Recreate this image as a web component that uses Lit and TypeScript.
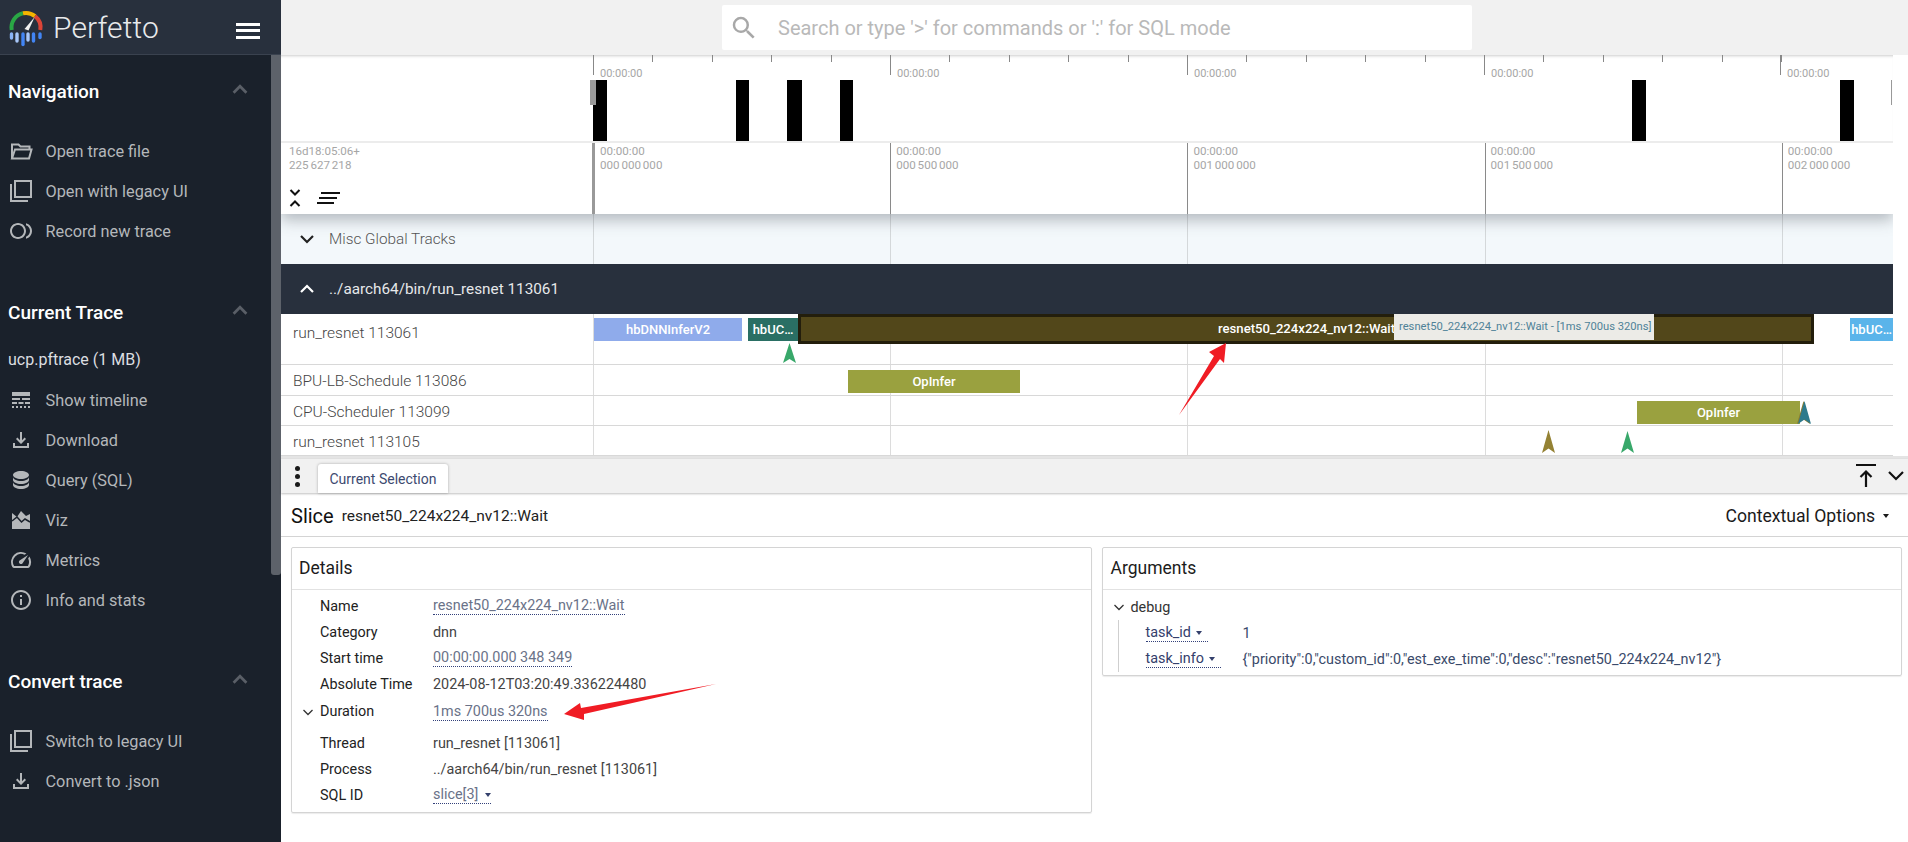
import { LitElement, html, css, svg } from "lit";
import { customElement } from "lit/decorators.js";

const P: Record<string, string> = {
  legacy: "M3 5H1v18h18v-2H3V5zm20-4H5v18h18V1zm-2 16H7V3h14v14z",
  record: "M9 4c-4.42 0-8 3.58-8 8s3.58 8 8 8 8-3.58 8-8-3.58-8-8-8zm0 14c-3.31 0-6-2.69-6-6s2.69-6 6-6 6 2.69 6 6-2.69 6-6 6zm8-13.74v2.09c2.33.82 4 3.04 4 5.65s-1.67 4.83-4 5.65v2.09c3.45-.89 6-4.01 6-7.74s-2.55-6.85-6-7.74z",
  timeline: "M3 16h5v-2H3v2zm6.5 0h5v-2h-5v2zm6.5 0h5v-2h-5v2zM3 20h2v-2H3v2zm4 0h2v-2H7v2zm4 0h2v-2h-2v2zm4 0h2v-2h-2v2zm4 0h2v-2h-2v2zM3 12h8v-2H3v2zm10 0h8v-2h-8v2zM3 4v4h18V4H3z",
  download: "M18 15v3H6v-3H4v5h16v-5h-2zm-1-4l-1.41-1.41L13 12.17V4h-2v8.17L8.41 9.59 7 11l5 5 5-5z",
  query: "M12 3C7.58 3 4 4.79 4 7s3.58 4 8 4 8-1.79 8-4-3.58-4-8-4zM4 9v3c0 2.21 3.58 4 8 4s8-1.79 8-4V9c0 2.21-3.58 4-8 4s-8-1.79-8-4zm0 5v3c0 2.21 3.58 4 8 4s8-1.79 8-4v-3c0 2.21-3.58 4-8 4s-8-1.79-8-4z",
  viz: "M3 5l5 4 4-6 5 5 4-2v15H3z",
  metrics: "M20.38 8.57l-1.23 1.85a8 8 0 0 1-.22 7.58H5.07A8 8 0 0 1 15.58 6.85l1.85-1.23A10 10 0 0 0 3.35 19a2 2 0 0 0 1.72 1h13.85a2 2 0 0 0 1.74-1 10 10 0 0 0-.27-10.44zm-9.79 6.84a2 2 0 0 0 2.83 0l5.66-8.49-8.49 5.66a2 2 0 0 0 0 2.83z",
  info: "M11 7h2v2h-2zm0 4h2v6h-2zm1-9C6.48 2 2 6.48 2 12s4.48 10 10 10 10-4.48 10-10S17.52 2 12 2zm0 18c-4.41 0-8-3.59-8-8s3.59-8 8-8 8 3.59 8 8-3.59 8-8 8z",
};

function icon(name: string) {
  if (name === "folder") {
    return html`<svg class="nav-icon" viewBox="0 0 24 24" fill="none" stroke="currentColor" stroke-width="2"><path d="M3 19.5V5.5h6.5l2 2h9v3"/><path d="M3 19.5l3-9h16.5l-2.5 9z"/></svg>`;
  }
  return html`<svg class="nav-icon" viewBox="0 0 24 24" fill="currentColor"><path d=${P[name]}/>${name === "viz"
    ? svg`<path d="M3 13l5-4 4.5 5 3.5-3 5 3" fill="none" stroke="#1a212b" stroke-width="1.6"/>`
    : ""}</svg>`;
}

const chevUp = html`<svg class="sec-chev" viewBox="0 0 24 24" fill="none" stroke="currentColor" stroke-width="3"><path d="M5 16l7-7 7 7"/></svg>`;

const sections = [
  { title: "Navigation", sub: "", items: [["folder", "Open trace file"], ["legacy", "Open with legacy UI"], ["record", "Record new trace"]] },
  { title: "Current Trace", sub: "ucp.pftrace (1 MB)", items: [["timeline", "Show timeline"], ["download", "Download"], ["query", "Query (SQL)"], ["viz", "Viz"], ["metrics", "Metrics"], ["info", "Info and stats"]] },
  { title: "Convert trace", sub: "", items: [["legacy", "Switch to legacy UI"], ["download", "Convert to .json"]] },
];

const OV_MAJORS = [0, 297, 594, 891, 1187];
const OV_MINORS = Array.from({ length: 21 }, (_, i) => i * 59.4);
const AX_MAJORS = [0, 297.2, 594.4, 891.6, 1188.8];
const AXIS = ["000 000 000", "000 500 000", "001 000 000", "001 500 000", "002 000 000"];
const BARS: [number, number][] = [[0, 14], [143, 13], [194, 15], [247, 13], [1039, 14], [1247, 14]];

@customElement("app-root")
export class AppRoot extends LitElement {
  static styles = css`
    :host { display: block; width: 1908px; height: 842px; position: relative; overflow: hidden; background: #fff; font-family: Roboto, "Liberation Sans", sans-serif; }
    .app { display: flex; width: 100%; height: 100%; }

    .sidebar { width: 281px; flex: none; background: #1a212b; color: #b4b7ba; position: relative; }
    .brand { height: 54px; background: #28303d; border-bottom: 1px solid #3a424f; display: flex; align-items: center; padding-left: 8px; box-sizing: content-box; }
    .logo { width: 38px; height: 40px; flex: none; }
    .brand-name { font-size: 30px; font-weight: 300; color: #e8eaec; margin-left: 7px; letter-spacing: 0.1px; }
    .burger { margin-left: auto; margin-right: 21px; width: 24px; height: 16px; display: flex; flex-direction: column; justify-content: space-between; margin-top: 7px; }
    .burger i { display: block; height: 3px; background: #fff; }
    .scroll { position: absolute; left: 271px; top: 55px; width: 10px; height: 520px; background: #5d626a; border-radius: 0 0 3px 3px; }
    .section { padding-top: 41px; }
    .section:first-of-type { padding-top: 16px; }
    .sec-head { height: 40px; display: flex; align-items: center; justify-content: space-between; padding: 0 30px 0 8px; color: #fff; font-size: 19px; font-weight: 500; }
    .sec-chev { width: 22px; height: 22px; color: #5a5f67; margin-top: -4px; }
    .sub { height: 40px; line-height: 40px; padding-left: 8px; margin-top: 8px; font-size: 16px; color: #dcdee0; }
    .nosub { height: 20px; }
    .item { height: 40px; display: flex; align-items: center; font-size: 16.3px; }
    .nav-icon { width: 24px; height: 24px; margin-left: 8.5px; margin-right: 13px; flex: none; }

    .main { flex: 1; min-width: 0; display: flex; flex-direction: column; position: relative; }
    .topbar { height: 55px; flex: none; background: #f1f1f1; padding: 5px 0 0 441px; box-sizing: border-box; }
    .search { width: 750px; height: 45px; background: #fff; border-radius: 2px; display: flex; align-items: center; color: #b9b9b9; font-size: 20px; }
    .search svg { width: 30px; height: 30px; margin-left: 7px; margin-right: 19px; color: #a8a8a8; flex: none; }

    .timeline { width: 1612px; flex: none; }
    .ov { height: 88px; display: flex; border-bottom: 2px solid #ececec; box-sizing: border-box; background: #fff; box-shadow: inset 0 3px 3px -2px #ccc; }
    .left { width: 312px; flex: none; box-sizing: border-box; }
    .canvas { flex: 1; position: relative; }
    .tick { position: absolute; top: 0; width: 1px; background: #888; }
    .tick.major { height: 20px; }
    .tick.minor { height: 7px; }
    .ov-label { position: absolute; top: 12px; font-size: 11px; line-height: 14px; color: #a6a6a6; }
    .bar { position: absolute; top: 25px; bottom: 0; background: #000; }
    .handle { position: absolute; top: 25px; left: -3px; width: 6px; height: 25px; background: #999; }
    .end-mark { position: absolute; left: 1298px; top: 25px; width: 1px; height: 25px; background: #999; }

    .axis { height: 71px; display: flex; background: #fff; position: relative; z-index: 2; box-shadow: 0 6px 14px rgba(60, 70, 80, 0.35); clip-path: inset(0 0 -30px 0); flex: none; }
    .axis .left { padding: 1px 0 0 8px; position: relative; font-size: 11.6px; line-height: 14px; color: #a6a6a6; word-spacing: -1px; display: flex; flex-direction: column; }
    .axis-icons { margin-top: auto; margin-bottom: 6px; display: flex; align-items: center; gap: 16px; }
    .axis-icons svg { display: block; }
    .ax-tick { position: absolute; top: 0; bottom: 0; width: 1px; background: #8a8a8a; }
    .ax-tick.first { width: 3px; left: -1px; background: #999; }
    .ax-label { position: absolute; top: 1px; font-size: 11.6px; line-height: 14px; color: #a6a6a6; white-space: pre; word-spacing: -1px; }

    .row { display: flex; border-bottom: 1px solid #d8d8d8; box-sizing: border-box; }
    .row .left { font-size: 15.5px; font-weight: 300; color: #444; padding-left: 12px; line-height: 32px; }
    .row .canvas { background-image: repeating-linear-gradient(to right, #dcdcdc 0 1px, transparent 1px 297.2px); }
    .row.first .left { line-height: 38px; }
    .misc { height: 50px; background: #f3f8fb; display: flex; }
    .misc .canvas { background-image: repeating-linear-gradient(to right, #d4d8da 0 1px, transparent 1px 297.2px); }
    .misc .left { display: flex; align-items: center; color: #555; font-size: 15.3px; font-weight: 300; padding-left: 18px; gap: 14px; }
    .proc { height: 50px; background: #28303d; color: #e6e8ea; display: flex; align-items: center; padding-left: 18px; gap: 14px; font-size: 15.3px; font-weight: 400; }
    .slice { position: absolute; top: 4px; height: 23px; color: #fff; font-size: 13px; font-weight: 500; line-height: 23px; text-align: center; white-space: nowrap; overflow: hidden; box-sizing: border-box; }
    .sel { top: 0; height: 30px; background: #52471a; border: 3px solid #231e0c; line-height: 24px; padding-left: 417px; text-align: left; overflow: visible; font-size: 13.15px; }
    .tip { position: absolute; top: 0; height: 26px; line-height: 26px; background: #ecebe7; color: #4f8298; font-size: 11.2px; padding-left: 5px; white-space: nowrap; box-sizing: border-box; z-index: 1; }
    .inst { position: absolute; display: block; }

    .gap { height: 3px; background: #e4e4e4; flex: none; width: 100%; }
    .tabs { height: 34px; background: #f1f1f1; display: flex; align-items: flex-end; flex: none; position: relative; box-shadow: 0 1px 2px rgba(0,0,0,0.25); z-index: 1; }
    .dots { width: 33px; height: 34px; margin-right: 4px; display: flex; flex-direction: column; align-items: center; justify-content: center; gap: 3px; flex: none; }
    .dots i { width: 5px; height: 5px; background: #1a1a1a; border-radius: 50%; }
    .tab { width: 130px; height: 29px; background: #fff; border-radius: 3px 3px 0 0; box-shadow: 0 0 3px rgba(0,0,0,0.3); font-size: 14px; color: #3d4a70; display: flex; align-items: center; justify-content: center; }
    .tab-tools { margin-left: auto; display: flex; align-items: center; height: 34px; gap: 9px; margin-right: 3px; }
    .tab-tools svg { display: block; }

    .panel-head { height: 44px; display: flex; align-items: center; padding: 3px 19px 0 10px; border-bottom: 1px solid #d4d4d4; box-sizing: border-box; flex: none; }
    .panel-head b { font-size: 20px; font-weight: 400; color: #111; }
    .panel-head span { font-size: 15.5px; color: #222; margin-left: 8px; }
    .ctx { margin-left: auto; font-size: 17.6px; color: #1a1a1a; display: flex; align-items: center; gap: 8px; }
    .caret { display: inline-block; border-left: 3.5px solid transparent; border-right: 3.5px solid transparent; border-top: 4px solid currentColor; }

    .cards { display: flex; gap: 10px; padding: 10px 6px 0 10px; align-items: flex-start; }
    .card { flex: 1; border: 1px solid #d4d4d4; border-radius: 2px; box-sizing: border-box; box-shadow: 0 1px 1px rgba(0,0,0,0.08); }
    .card h2 { margin: 0; height: 41px; border-bottom: 1px solid #e2e2e2; font-size: 17.5px; font-weight: 400; line-height: 41px; padding-left: 7px; color: #1c1c1c; }
    .card.arg-card h2 { padding-left: 8px; }
    .rows { padding: 3px 0 4px; }
    .drow { display: flex; height: 26px; align-items: center; font-size: 14.4px; padding-left: 28px; position: relative; }
    .drow.tall { height: 29px; margin-bottom: 4px; }
    .drow .k { width: 113px; flex: none; color: #222; }
    .drow .v { color: #444; }
    .drow .v.link { color: #6a7288; border-bottom: 1px dotted #33417a; line-height: 17px; }
    .twist { position: absolute; left: 10px; width: 12px; height: 12px; color: #333; }
    .args { padding: 4px 0 3px; font-size: 14.4px; }
    .dbg { height: 26px; display: flex; align-items: center; padding-left: 28px; position: relative; color: #333; }
    .argrows { margin-left: 15px; border-left: 1px solid #cfcfcf; padding-left: 27px; }
    .argrow { height: 26px; display: flex; align-items: center; }
    .argrow .k { width: 97px; flex: none; }
    .argrow .k span { color: #34406c; border-bottom: 1px dotted #33417a; line-height: 17px; display: inline-flex; align-items: center; gap: 5px; padding-right: 6px; }
    .argrow .v { color: #3a4a6a; }
    .sql-caret { margin: 0 0 2px 3px; color: #34406c; }

    .overlay { position: absolute; left: 0; top: 0; width: 1908px; height: 842px; pointer-events: none; z-index: 5; }
  `;

  private inst(x: number, top: number, h: number, color: string) {
    return html`<svg class="inst" style="left:${x - 6.5}px;top:${top}px" width="13" height=${h} viewBox="0 0 13 20" preserveAspectRatio="none"><path d="M6.5 0L13 20 6.5 16 0 20z" fill=${color}/></svg>`;
  }

  render() {
    return html`<div class="app">
      <aside class="sidebar">
        <div class="brand">
          <svg class="logo" viewBox="0 0 38 40">
            <g fill="none" stroke-width="4">
              <path d="M3.7 23A14.500 14.500 0 0 1 15 6.300" stroke="#2aa745"/>
              <path d="M15 6.300A14.500 14.500 0 0 1 27 9.100" stroke="#f4b400"/>
              <path d="M27 9.100A14.500 14.500 0 0 1 32.300 23" stroke="#db4437"/>
            </g>
            <path d="M16.500 22L26.700 10 20.500 23.500z" fill="#f1f1f1"/>
            <g stroke-width="3.4" stroke-linecap="round">
              <path d="M3.500 27v4" stroke="#8ab4f8"/>
              <path d="M9 27v7" stroke="#a8c7fa"/>
              <path d="M15 27v10.500" stroke="#4285f4"/>
              <path d="M20 27v6" stroke="#a8c7fa"/>
              <path d="M25.500 27v7" stroke="#4285f4"/>
              <path d="M32 27v3.500" stroke="#4285f4"/>
            </g>
          </svg>
          <span class="brand-name">Perfetto</span>
          <div class="burger"><i></i><i></i><i></i></div>
        </div>
        ${sections.map(
          (s) => html`<section class="section">
            <div class="sec-head">${s.title}${chevUp}</div>
            ${s.sub ? html`<div class="sub">${s.sub}</div>` : html`<div class="nosub"></div>`}
            ${s.items.map((i) => html`<div class="item">${icon(i[0])}<span>${i[1]}</span></div>`)}
          </section>`
        )}
        <div class="scroll"></div>
      </aside>

      <main class="main">
        <div class="topbar">
          <div class="search">
            <svg viewBox="0 0 24 24" fill="currentColor"><path d="M15.5 14h-.79l-.28-.27A6.47 6.47 0 0 0 16 9.5 6.5 6.5 0 1 0 9.5 16c1.61 0 3.09-.59 4.23-1.57l.27.28v.79l5 4.99L20.49 19l-4.99-5zm-6 0C7.01 14 5 11.99 5 9.5S7.01 5 9.5 5 14 7.01 14 9.5 11.99 14 9.5 14z"/></svg>
            <span>Search or type '&gt;' for commands or ':' for SQL mode</span>
          </div>
        </div>

        <div class="timeline">
          <div class="ov">
            <div class="left"></div>
            <div class="canvas">
              ${OV_MINORS.map((x) => html`<div class="tick minor" style="left:${x}px"></div>`)}
              ${OV_MAJORS.map((x) => html`<div class="tick major" style="left:${x}px"></div><div class="ov-label" style="left:${x + 7}px">00:00:00</div>`)}
              ${BARS.map((b) => html`<div class="bar" style="left:${b[0]}px;width:${b[1]}px"></div>`)}
              <div class="handle"></div>
              <div class="end-mark"></div>
            </div>
          </div>
          <div class="axis">
            <div class="left">
              <div>16d18:05:06+<br />225 627 218</div>
              <div class="axis-icons">
                <svg width="12" height="20" viewBox="0 0 12 20" fill="none" stroke="#111" stroke-width="2"><path d="M1.500 2l4.500 4.500L10.500 2M1.500 18L6 13.500l4.500 4.500"/></svg>
                <svg width="23" height="12" viewBox="0 0 23 12" fill="#111"><path d="M4 0h19v2H4zM2 5h18v2H2zM0 10h17v2H0z"/></svg>
              </div>
            </div>
            <div class="canvas">
              ${AX_MAJORS.map((x, i) => html`<div class="ax-tick ${i === 0 ? "first" : ""}" style=${i === 0 ? "" : `left:${x}px`}></div><div class="ax-label" style="left:${i === 0 ? 7 : x + 6}px">00:00:00
${AXIS[i]}</div>`)}
            </div>
          </div>

          <div class="misc">
            <div class="left">
              <svg width="16" height="16" viewBox="0 0 16 16" fill="none" stroke="#222" stroke-width="2.2"><path d="M2 5l6 6 6-6"/></svg>
              <span>Misc Global Tracks</span>
            </div>
            <div class="canvas"></div>
          </div>
          <div class="proc">
            <svg width="16" height="16" viewBox="0 0 16 16" fill="none" stroke="#fff" stroke-width="2.2"><path d="M2 11l6-6 6 6"/></svg>
            <span>../aarch64/bin/run_resnet 113061</span>
          </div>

          <div class="row first" style="height:51px">
            <div class="left">run_resnet 113061</div>
            <div class="canvas">
              <div class="slice" style="left:1px;width:148px;background:#8fabeb">hbDNNInferV2</div>
              <div class="slice" style="left:155px;width:50px;background:#2a6f64">hbUC…</div>
              <div class="slice sel" style="left:205px;width:1016px">resnet50_224x224_nv12::Wait</div>
              <div class="tip" style="left:801px;width:260px">resnet50_224x224_nv12::Wait - [1ms 700us 320ns]</div>
              <div class="slice" style="left:1257px;width:43px;background:#5ab4ea">hbUC…</div>
              ${this.inst(196, 29, 20, "#38a86a")}
            </div>
          </div>
          <div class="row" style="height:31px">
            <div class="left">BPU-LB-Schedule 113086</div>
            <div class="canvas">
              <div class="slice" style="left:255px;width:172px;background:#9aa13f;top:5px">OpInfer</div>
            </div>
          </div>
          <div class="row" style="height:30px">
            <div class="left">CPU-Scheduler 113099</div>
            <div class="canvas">
              <div class="slice" style="left:1044px;width:163px;background:#9aa13f;top:5px">OpInfer</div>
              ${this.inst(1210, 5, 23, "#8a7a30")}
              ${this.inst(1211, 5, 23, "#2e7a8c")}
            </div>
          </div>
          <div class="row" style="height:30px">
            <div class="left">run_resnet 113105</div>
            <div class="canvas">
              ${this.inst(955, 4, 23, "#948234")}
              ${this.inst(1034, 5, 22, "#38a86a")}
            </div>
          </div>
        </div>

        <div class="gap"></div>
        <div class="tabs">
          <div class="dots"><i></i><i></i><i></i></div>
          <div class="tab">Current Selection</div>
          <div class="tab-tools">
            <svg width="24" height="26" viewBox="0 0 24 26" fill="none" stroke="#111" stroke-width="2.2"><path d="M2 2h20M12 24V9M6.500 14l5.500-5.500 5.500 5.500"/></svg>
            <svg width="18" height="12" viewBox="0 0 18 12" fill="none" stroke="#111" stroke-width="2.2"><path d="M2 2l7 7 7-7"/></svg>
          </div>
        </div>
        <div class="panel-head">
          <b>Slice</b><span>resnet50_224x224_nv12::Wait</span>
          <div class="ctx">Contextual Options <i class="caret"></i></div>
        </div>
        <div class="cards">
          <div class="card">
            <h2>Details</h2>
            <div class="rows">
              <div class="drow"><div class="k">Name</div><div class="v link">resnet50_224x224_nv12::Wait</div></div>
              <div class="drow"><div class="k">Category</div><div class="v">dnn</div></div>
              <div class="drow"><div class="k">Start time</div><div class="v link">00:00:00.000 348 349</div></div>
              <div class="drow"><div class="k">Absolute Time</div><div class="v">2024-08-12T03:20:49.336224480</div></div>
              <div class="drow tall">
                <svg class="twist" viewBox="0 0 12 12" fill="none" stroke="currentColor" stroke-width="1.3"><path d="M1.500 4l4.500 4.500L10.500 4"/></svg>
                <div class="k">Duration</div><div class="v link">1ms 700us 320ns</div>
              </div>
              <div class="drow"><div class="k">Thread</div><div class="v">run_resnet [113061]</div></div>
              <div class="drow"><div class="k">Process</div><div class="v">../aarch64/bin/run_resnet [113061]</div></div>
              <div class="drow"><div class="k">SQL ID</div><div class="v link">slice[3] <i class="caret sql-caret"></i></div></div>
            </div>
          </div>
          <div class="card arg-card">
            <h2>Arguments</h2>
            <div class="args">
              <div class="dbg">
                <svg class="twist" viewBox="0 0 12 12" fill="none" stroke="currentColor" stroke-width="1.3"><path d="M1.500 4l4.500 4.500L10.500 4"/></svg>
                debug
              </div>
              <div class="argrows">
                <div class="argrow"><div class="k"><span>task_id <i class="caret"></i></span></div><div class="v">1</div></div>
                <div class="argrow"><div class="k"><span>task_info <i class="caret"></i></span></div><div class="v">{"priority":0,"custom_id":0,"est_exe_time":0,"desc":"resnet50_224x224_nv12"}</div></div>
              </div>
            </div>
          </div>
        </div>
      </main>
    </div>
    <svg class="overlay" viewBox="0 0 1908 842">
      <path d="M1179 415L1214 356 1209 352 1226 343 1224 363 1220 359z" fill="#f01c24"/>
      <path d="M716 684L584 714 584 720 564 714 580 703 581 708z" fill="#f01c24"/>
    </svg>`;
  }
}
